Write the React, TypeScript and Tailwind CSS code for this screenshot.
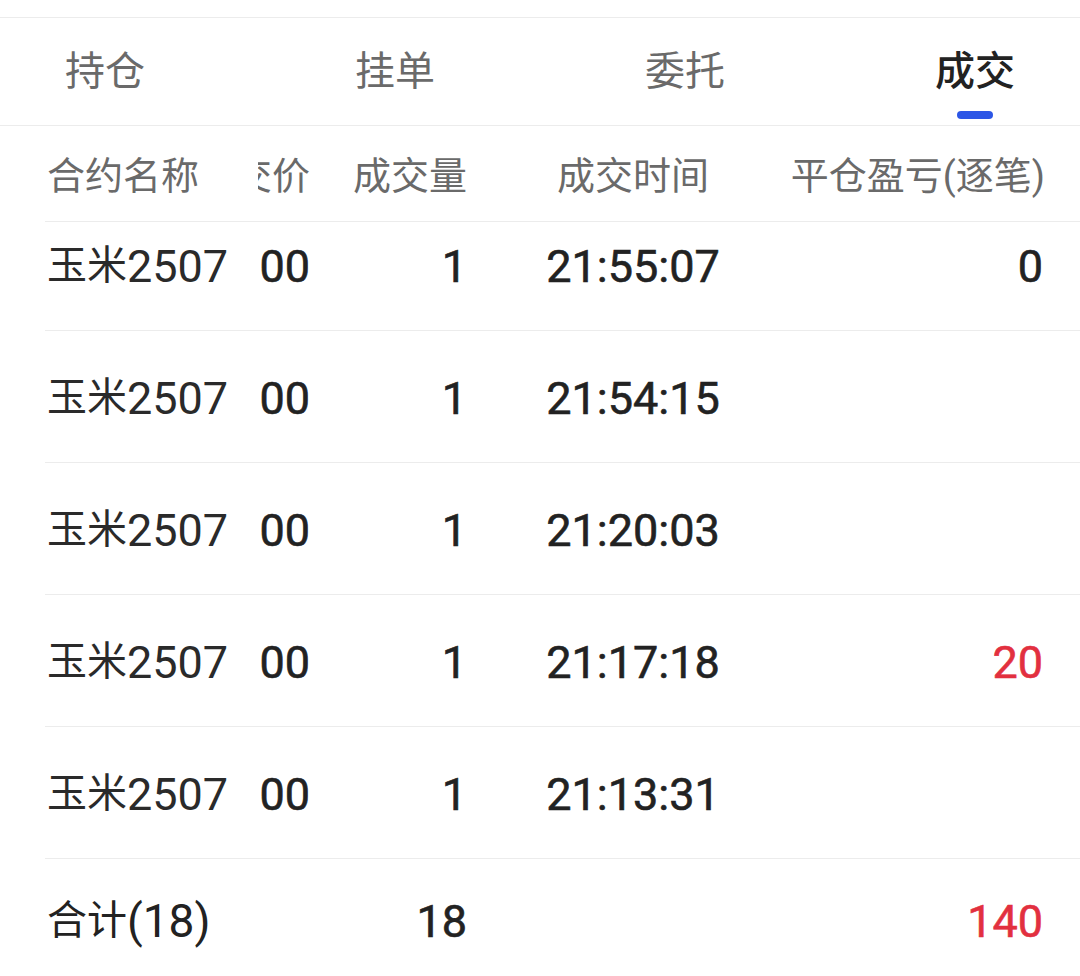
import React from "react";

const FONT = "font-['Roboto','Noto_Sans_CJK_SC',sans-serif]";
const NUM = "text-[45px] leading-none [-webkit-text-stroke:0.6px_currentColor]";

const tabs = ["持仓", "挂单", "委托", "成交"];

const rows = [
  { name: "2507", price: "2300", qty: "1", time: "21:55:07", pnl: "0", red: false },
  { name: "2507", price: "2300", qty: "1", time: "21:54:15", pnl: "", red: false },
  { name: "2507", price: "2300", qty: "1", time: "21:20:03", pnl: "", red: false },
  { name: "2507", price: "2300", qty: "1", time: "21:17:18", pnl: "20", red: true },
  { name: "2507", price: "2300", qty: "1", time: "21:13:31", pnl: "", red: false },
];

export default function App() {
  return (
    <div className={`w-[1080px] h-[976px] bg-white overflow-hidden ${FONT}`}>
      <div className="h-[18px] border-b border-[#ececec]" />

      {/* tab bar */}
      <div className="h-[108px] border-b border-[#ececec] flex items-center justify-between px-[65px]">
        {tabs.map((t) => {
          const active = t === "成交";
          return (
            <div key={t} className="relative h-full flex items-center">
              <span
                className={
                  active
                    ? "text-[40px] leading-none text-[#222] font-medium"
                    : "text-[40px] leading-none text-[#6a6a6a]"
                }
              >
                {t}
              </span>
              {active && (
                <div className="absolute bottom-[6px] left-1/2 -translate-x-1/2 w-[36px] h-[8px] rounded-full bg-[#2c56e6]" />
              )}
            </div>
          );
        })}
      </div>

      {/* table */}
      <div className="ml-[45px]">
        <div className="h-[96px] border-b border-[#ececec] flex items-center text-[38px] leading-none text-[#6a6a6a] pt-[4px]">
          <div className="w-[213px] pl-[2px]">合约名称</div>
          <div className="w-[52px] overflow-hidden flex justify-end whitespace-nowrap">成交价</div>
          <div className="w-[157px] text-right">成交量</div>
          <div className="w-[332px] text-center">成交时间</div>
          <div className="w-[246px] flex justify-end whitespace-nowrap">平仓盈亏(逐笔)</div>
        </div>

        {rows.map((r, i) => (
          <div
            key={r.time}
            className={`${i === 0 ? "h-[109px]" : "h-[132px]"} border-b border-[#ececec] flex items-end pb-[40px] text-[#222]`}
          >
            <div className="w-[213px] h-[48px] flex items-center pl-[2px] whitespace-nowrap text-[#2a2a2a]">
              <span className="text-[40px] leading-none">玉米</span>
              <span className="text-[45px] leading-none">{r.name}</span>
            </div>
            <div className={`w-[52px] h-[48px] overflow-hidden flex items-center justify-end whitespace-nowrap ${NUM}`}>
              {r.price}
            </div>
            <div className={`w-[157px] h-[48px] flex items-center justify-end ${NUM}`}>
              {r.qty}
            </div>
            <div className={`w-[332px] h-[48px] flex items-center justify-center ${NUM}`}>
              {r.time}
            </div>
            <div
              className={`w-[244px] h-[48px] flex items-center justify-end ${NUM} ${
                r.red ? "text-[#e2303f]" : "text-[#222]"
              }`}
            >
              {r.pnl}
            </div>
          </div>
        ))}

        {/* total */}
        <div className="h-[118px] flex items-start pt-[38px] text-[#222]">
          <div className="w-[265px] h-[48px] flex items-center pl-[2px] whitespace-nowrap">
            <span className="text-[40px] leading-none">合计</span>
            <span className="text-[46px] leading-none">(18)</span>
          </div>
          <div className={`w-[157px] h-[48px] flex items-center justify-end ${NUM}`}>
            18
          </div>
          <div className="w-[332px]" />
          <div className={`w-[244px] h-[48px] flex items-center justify-end text-[#e2303f] ${NUM}`}>
            140
          </div>
        </div>
      </div>
    </div>
  );
}
